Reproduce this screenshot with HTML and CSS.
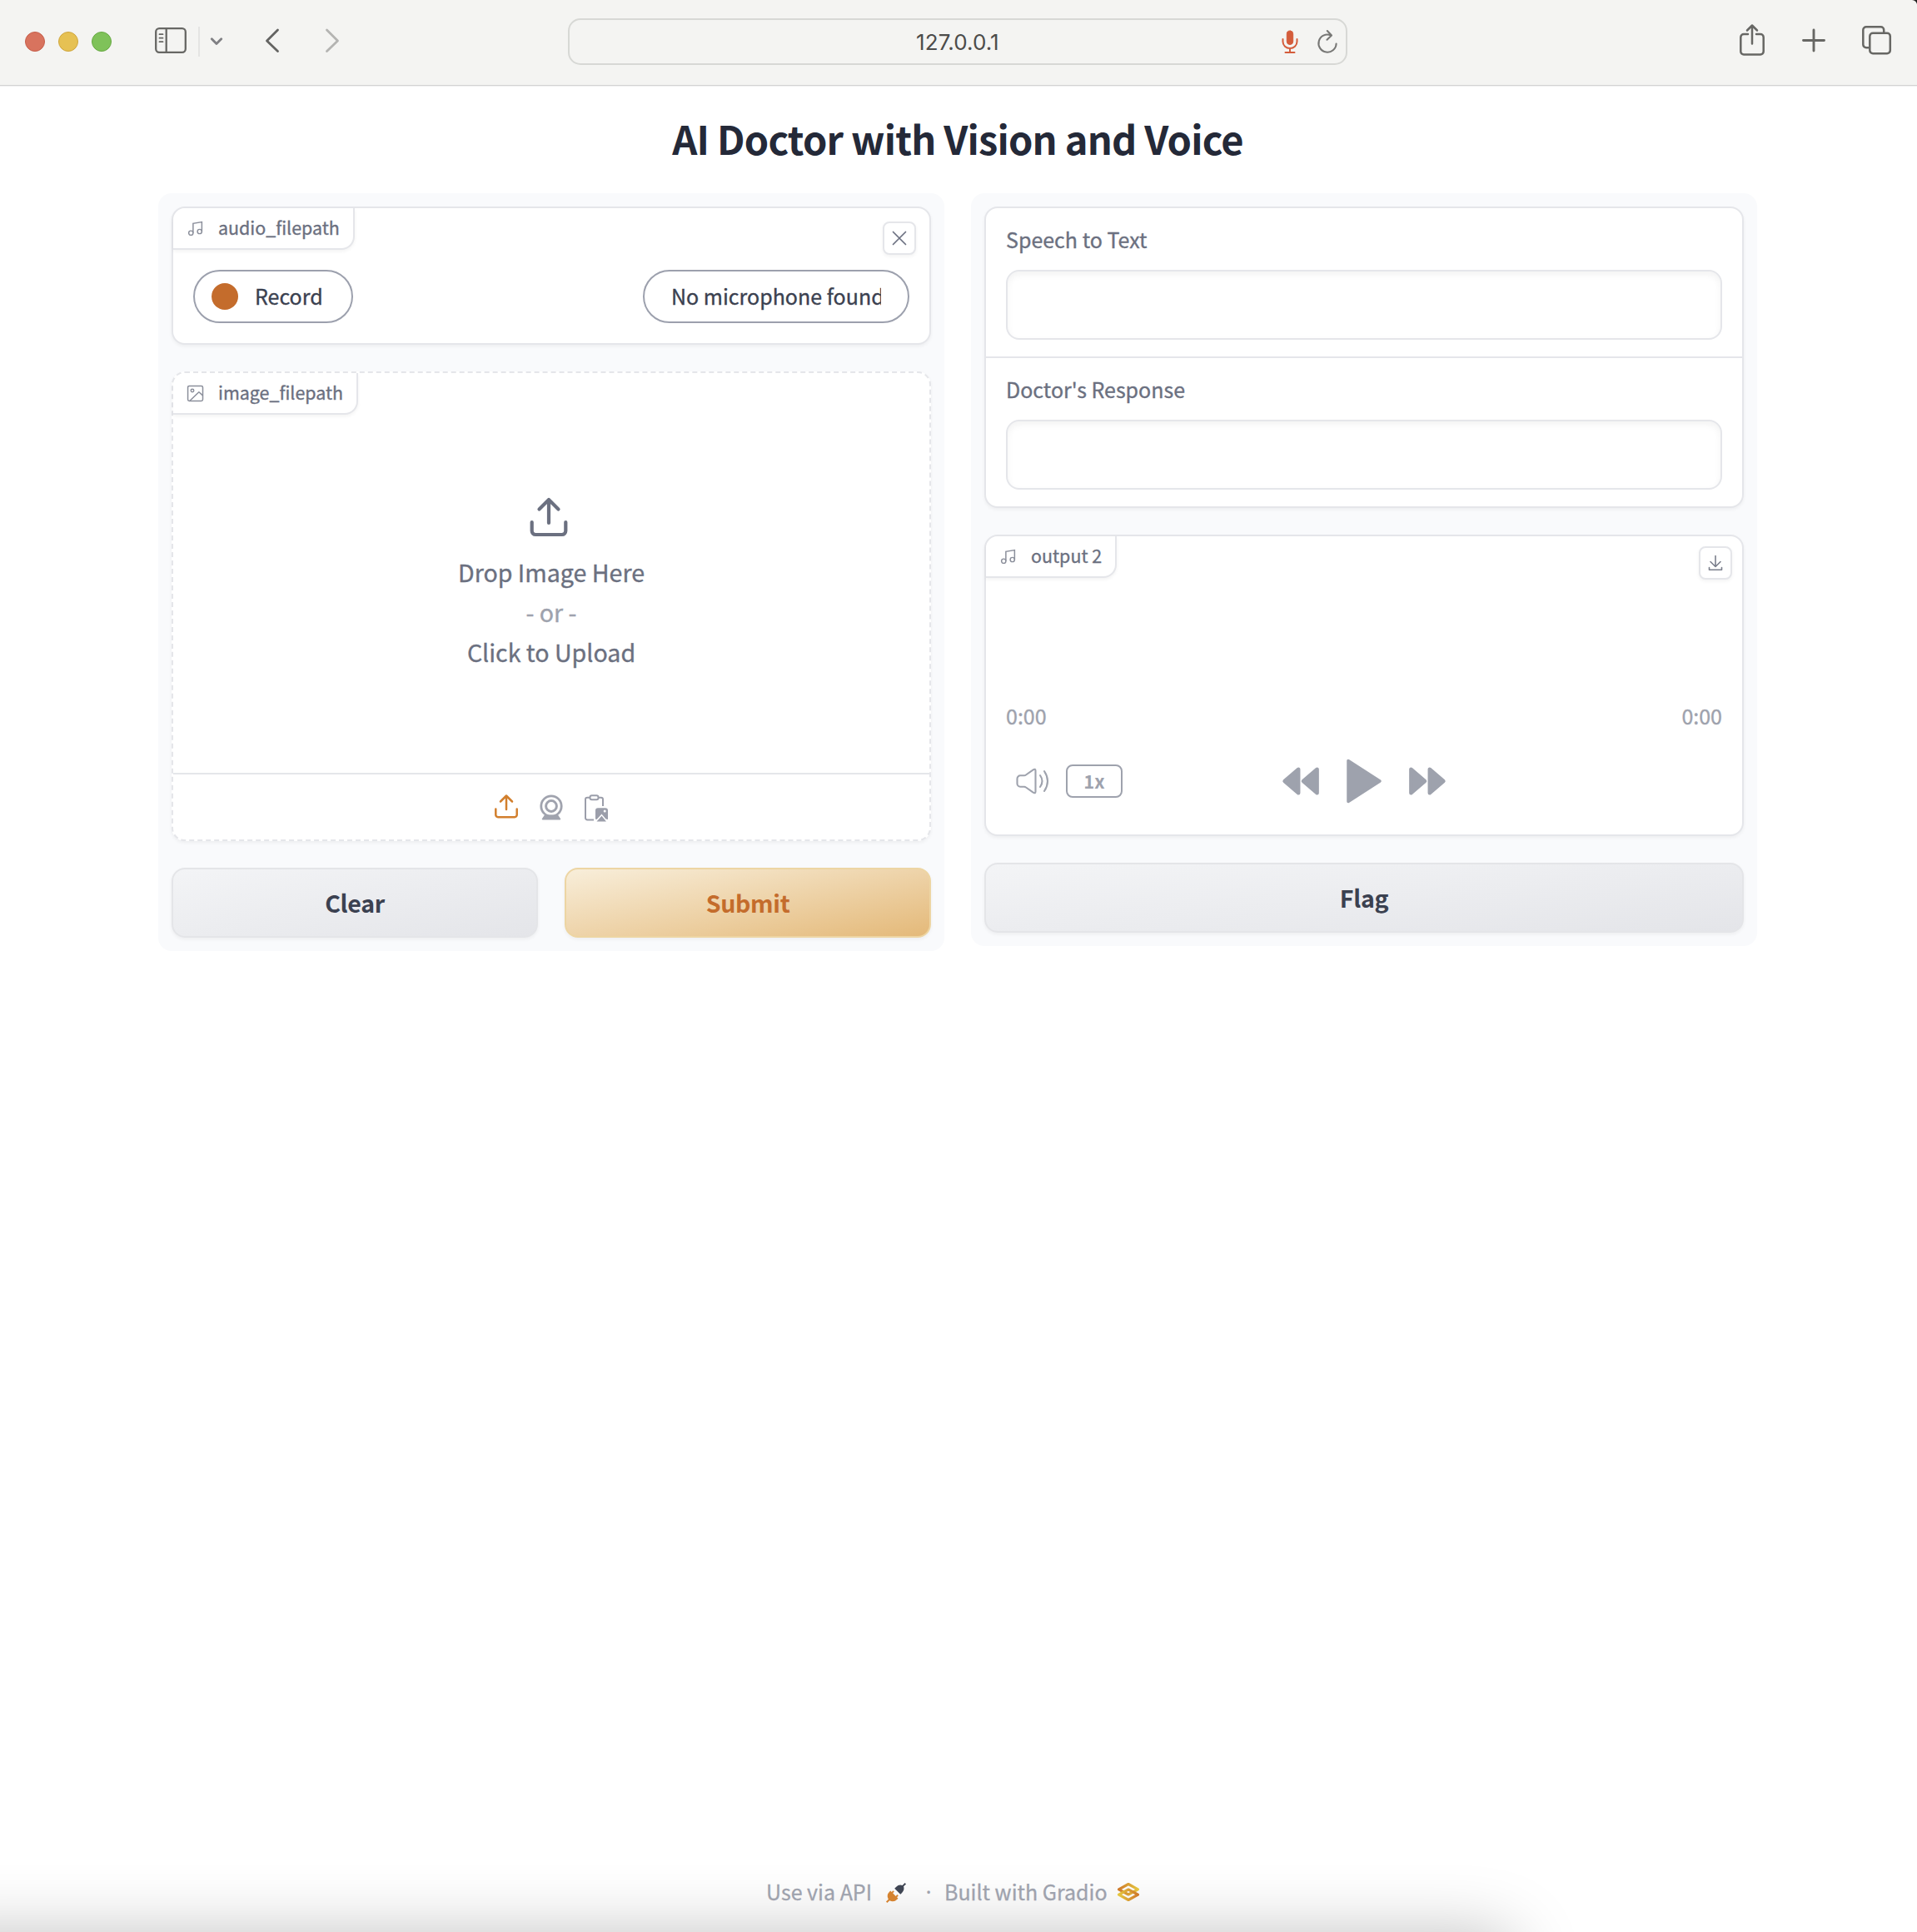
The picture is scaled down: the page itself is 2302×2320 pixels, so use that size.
FILE: index.html
```html
<!DOCTYPE html>
<html lang="en">
<head>
<meta charset="utf-8">
<title>AI Doctor with Vision and Voice</title>
<link rel="stylesheet" href="styles.css">
</head>
<body>
<div class="window">
  <div class="toolbar-wrap">
  <header class="toolbar">
    <div class="lights"><i class="light red"></i><i class="light yellow"></i><i class="light green"></i></div>
    <svg class="ic-sidebar" width="40" height="34" viewBox="0 0 40 34" fill="none" stroke="#676764" stroke-width="2.3"><rect x="2.2" y="2.2" width="35.6" height="28.6" rx="4"/><path d="M14.7 2v29"/><path d="M6.5 9.2h4M6.5 13.7h4M6.5 18.2h4" stroke-width="1.8" stroke-linecap="round"/></svg>
    <span class="tool-sep"></span>
    <svg class="ic-chev" width="16" height="12" viewBox="0 0 16 12" fill="none" stroke="#7f7f83" stroke-width="2.8" stroke-linecap="round" stroke-linejoin="round"><path d="M2.3 2.8 8 8.6l5.7-5.8"/></svg>
    <svg class="ic-back" width="18" height="30" viewBox="0 0 18 30" fill="none" stroke="#646462" stroke-width="2.8" stroke-linecap="round" stroke-linejoin="round"><path d="M15.500 2 2.500 15l13 12.500"/></svg>
    <svg class="ic-fwd" width="18" height="30" viewBox="0 0 18 30" fill="none" stroke="#b4b4b2" stroke-width="2.8" stroke-linecap="round" stroke-linejoin="round"><path d="m2.500 2 13 13-13 12.500"/></svg>
    <div class="address">
      <span class="address-text">127.0.0.1</span>
      <svg class="ic-mic" width="20" height="30" viewBox="0 0 20 30" fill="none" stroke="#d45c3b" stroke-width="2" stroke-linecap="round"><rect x="6.3" y="2" width="7.4" height="16.5" rx="3.7" fill="#d45c3b" stroke-width="1"/><path d="M1.5 12v3a8.5 8 0 0 0 17 0v-3M10 23v5M4.5 28h11"/></svg>
      <svg class="ic-reload" width="26" height="30" viewBox="0 0 26 30" fill="none" stroke="#777775" stroke-width="2.1" stroke-linecap="round" stroke-linejoin="round"><path d="M23.6 17.5A10.6 10.6 0 1 1 16.8 7.2M12.8 2l5.2 5.5-5.5 5.2"/></svg>
    </div>
    <div class="tools-right">
      <svg width="32" height="40" viewBox="0 0 32 40" fill="none" stroke="#676764" stroke-width="2.5" stroke-linecap="round" stroke-linejoin="round"><path d="M11 13H6a3.7 3.7 0 0 0-3.7 3.7v17.1A3.7 3.7 0 0 0 6 37.500h20a3.700 3.700 0 0 0 3.700-3.700V16.700A3.700 3.700 0 0 0 26 13h-5"/><path d="M16 24.500V3M10 8.500l6-6 6 6"/></svg>
      <svg width="28" height="28" viewBox="0 0 28 28" stroke="#676764" stroke-width="2.9" stroke-linecap="round"><path d="M14 2v25M1.500 14.500h25"/></svg>
      <svg width="37" height="36" viewBox="0 0 37 36" fill="none" stroke="#676764" stroke-width="2.500" stroke-linejoin="round"><path d="M9 27.200H6a3.700 3.700 0 0 1-3.700-3.700V6A3.700 3.700 0 0 1 6 2.300h17.500A3.700 3.700 0 0 1 27.200 6v3"/><rect x="10.300" y="9.800" width="24.500" height="24.500" rx="3.700"/></svg>
    </div>
  </header>
  </div>

  <main class="app">
    <h1 class="title">AI Doctor with Vision and Voice</h1>
    <div class="columns">
      <section class="panel">
        <div class="block audio-in">
          <div class="block-label"><svg class="tag-icon" viewBox="0 0 24 24" fill="none" stroke="#8b8f9b" stroke-width="1.700"><path d="M9 18V5l12-2v13"/><circle cx="6" cy="18" r="3"/><circle cx="18" cy="16" r="3"/></svg><span>audio_filepath</span></div>
          <button class="icon-button close"><svg width="18" height="18" viewBox="0 0 18 18" stroke="#6b7080" stroke-width="1.700" stroke-linecap="round"><path d="m1.500 1.500 15 15m0-15-15 15"/></svg></button>
          <div class="record-row">
            <button class="pill record"><i class="dot"></i><span>Record</span></button>
            <div class="pill mic"><span class="clip">No microphone found</span></div>
          </div>
        </div>
        <div class="block image-in">
          <div class="block-label"><svg class="tag-icon" viewBox="0 0 24 24" fill="none" stroke="#8b8f9b" stroke-width="1.700" stroke-linejoin="round"><rect x="1.800" y="1.800" width="20.500" height="20.500" rx="2"/><circle cx="8" cy="8" r="2"/><path d="m4.500 22 12.500-12 5.500 5"/></svg><span>image_filepath</span></div>
          <div class="drop">
            <svg class="drop-icon" width="50" height="50" viewBox="0 0 50 50" fill="none" stroke="#6b7080" stroke-width="4.200" stroke-linecap="round" stroke-linejoin="round"><path d="M4.700 31v10.500a4.500 4.500 0 0 0 4.500 4.500h31.600a4.500 4.500 0 0 0 4.500-4.500V31M25 32V4M13.500 15.500 25 4l11.500 11.500"/></svg>
            <div class="drop-line">Drop Image Here</div>
            <div class="drop-line or">- or -</div>
            <div class="drop-line">Click to Upload</div>
          </div>
          <div class="sources">
            <svg width="30" height="32" viewBox="0 0 30 32" fill="none" stroke="#d27f2d" stroke-width="2.500" stroke-linecap="round" stroke-linejoin="round"><path d="M2.300 18.500v7a2.700 2.700 0 0 0 2.700 2.700h20a2.700 2.700 0 0 0 2.700-2.700v-7M15 19V2.500M8 9.500l7-7 7 7"/></svg>
            <svg width="30" height="32" viewBox="0 0 30 32" fill="none" stroke="#a0a3ae"><circle cx="15" cy="15" r="12.200" stroke-width="2.800"/><circle cx="15" cy="15" r="6.400" stroke-width="3"/><path d="M7 25.500h16l3 4.500a.9.900 0 0 1-.8 1.500H4.800a.9.900 0 0 1-.8-1.500z" fill="#a0a3ae" stroke="none"/></svg>
            <svg width="30" height="34" viewBox="0 0 30 34" fill="none" stroke="#9b9eaa" stroke-width="2"><path d="M12 31.500H4.300A2.300 2.300 0 0 1 2 29.200V7a2.300 2.300 0 0 1 2.300-2.300H7M18 4.700h2.700A2.300 2.300 0 0 1 23 7v8"/><rect x="7.500" y="2.300" width="10" height="5" rx="2.200"/><path d="M17 17.200h9a3 3 0 0 1 3 3V31l-2.500-.5-5-6-6 6.500-1.500-.5V20.200a3 3 0 0 1 3-3z" fill="#9b9eaa" stroke="none"/><circle cx="25.200" cy="21" r="1.500" fill="#fff" stroke="none"/><path d="m15.500 33.500 6-6.800 5.500 6.800z" fill="#9b9eaa" stroke="none"/></svg>
          </div>
        </div>
        <div class="buttons">
          <button class="btn">Clear</button>
          <button class="btn primary">Submit</button>
        </div>
      </section>

      <section class="panel">
        <div class="block form">
          <label class="field"><span class="field-label">Speech to Text</span><span class="input"></span></label>
          <label class="field second"><span class="field-label">Doctor's Response</span><span class="input"></span></label>
        </div>
        <div class="block audio-out">
          <div class="block-label"><svg class="tag-icon" viewBox="0 0 24 24" fill="none" stroke="#8b8f9b" stroke-width="1.700"><path d="M9 18V5l12-2v13"/><circle cx="6" cy="18" r="3"/><circle cx="18" cy="16" r="3"/></svg><span>output 2</span></div>
          <button class="icon-button download"><svg width="18" height="20" viewBox="0 0 18 20" fill="none" stroke="#7b7f8c" stroke-width="1.600" stroke-linecap="round" stroke-linejoin="round"><path d="M9 1.500v13M3 8.500l6 6 6-6M1.500 15.500v2.700h15v-2.700"/></svg></button>
          <div class="times"><span>0:00</span><span>0:00</span></div>
          <div class="player">
            <div class="player-left">
              <svg width="42" height="36" viewBox="0 0 42 36" fill="none" stroke="#9ea2ad" stroke-width="2.100" stroke-linejoin="round" stroke-linecap="round"><path d="M2.500 15a3.700 3.700 0 0 1 3.700-3.700H11q1 0 2-.8l8.700-6.200q2.800-1.600 2.800 1.200v25q0 2.800-2.800 1.200L13 25.500q-1-.8-2-.8H6.200A3.700 3.700 0 0 1 2.500 21zM30 11q5 7 0 14M35 6q8 12 0 24"/></svg>
              <span class="speed">1x</span>
            </div>
            <div class="player-mid">
              <svg width="44" height="34" viewBox="0 0 44 34" fill="#9ea2ad" stroke="#9ea2ad" stroke-width="4.500" stroke-linejoin="round"><path d="M19.200 2.800v28.400L2.600 17zM41.600 2.800v28.400L25 17z"/></svg>
              <svg width="44" height="60" viewBox="0 0 44 60" fill="#9ea2ad" stroke="#9ea2ad" stroke-width="3.500" stroke-linejoin="round"><path d="M3 5.500v49L41 30z"/></svg>
              <svg width="44" height="34" viewBox="0 0 44 34" fill="#9ea2ad" stroke="#9ea2ad" stroke-width="4.500" stroke-linejoin="round"><path d="M2.400 2.800v28.400L19 17zM24.800 2.800v28.400L41.400 17z"/></svg>
            </div>
          </div>
        </div>
        <div class="buttons"><button class="btn">Flag</button></div>
      </section>
    </div>
  </main>

  <footer class="footer">
    <span>Use via API</span>
    <svg class="ic-plug" width="24" height="24" viewBox="0 0 24 24"><g transform="rotate(45 12 12)"><path d="M7 9.500V7q0-5 4-6.800V-4h2V.2Q17 2 17 7v2.500z" fill="#404654"/><path d="M5.500 15h2v-2.500h2V15h5v-2.500h2V15h2v1.500q0 6-5.500 7.500V28h-2v-4q-5.500-1.500-5.500-7.500z" fill="#d58330"/></g></svg>
    <span class="mid">·</span>
    <span class="built">Built with Gradio</span>
    <svg class="ic-gradio" width="28" height="24" viewBox="0 0 28 24" fill="none" stroke-width="3.200" stroke-linejoin="round"><defs><linearGradient id="up" x1="0" y1="0" x2="1" y2="0"><stop offset="0" stop-color="#cf7a2b"/><stop offset="1" stop-color="#e5c63f"/></linearGradient><linearGradient id="down" x1="0" y1="0" x2="1" y2="0"><stop offset="0" stop-color="#e5c63f"/><stop offset="1" stop-color="#cf7a2b"/></linearGradient></defs><path d="m14 2.500 11.500 6.300L14 15 2.500 8.800z" stroke="url(#up)"/><path d="m14 9 11.500 6.200L14 21.500 2.500 15.200z" stroke="url(#down)"/></svg>
  </footer>
</div>
</body>
</html>
```
FILE: styles.css
```css
* { box-sizing: border-box; }
body { margin: 0; background: #fff; color: #6b7080; font-family: "Noto Sans CJK SC", "Noto Sans", sans-serif; }
svg { display: block; flex: none; overflow: visible; }
button { font: inherit; margin: 0; padding: 0; }
.window { width: 2302px; height: 2320px; display: flex; flex-direction: column; overflow: hidden; }

/* Browser toolbar */
.toolbar-wrap { background: #222; }
.toolbar { height: 103px; background: #f4f4f2; border-bottom: 1px solid #d3d3d3; border-top-right-radius: 6px; box-shadow: 0 1px #f0f0f0; display: flex; align-items: flex-start; padding: 0 30px; }
.lights { display: flex; gap: 16px; padding-top: 38px; }
.light { width: 24px; height: 24px; border-radius: 50%; border: 1px solid; }
.red { background: #d8735e; border-color: #c65e4a; }
.yellow { background: #e6c153; border-color: #cfa63e; }
.green { background: #7fc25a; border-color: #68aa44; }
.ic-sidebar { margin: 32px 0 0 51px; }
.tool-sep { width: 2px; height: 36px; background: #e4e4e3; margin: 32px 0 0 13px; }
.ic-chev { margin: 44px 0 0 12px; }
.ic-back { margin: 34px 0 0 50px; }
.ic-fwd { margin: 34px 0 0 54px; }
.address { width: 936px; height: 56px; margin: 22px 0 0 274px; border: 2px solid #d7d8d5; border-radius: 15px; display: flex; align-items: center; padding-right: 9px; }
.address-text { flex: 1; padding: 2px 0 0 416px; font: 26px/50px Inter, sans-serif; letter-spacing: .1px; color: #4c4c4a; }
.ic-mic { margin-right: 22px; }
.tools-right { display: flex; align-items: center; margin: 28px 0 0 auto; gap: 43.5px; }

/* App */
.app { padding: 24px 192px 0 190px; }
.title { margin: 0 0 28px; font-size: 47px; line-height: 77px; letter-spacing: -.82px; text-align: center; color: #242938; font-weight: 700; }
.columns { display: flex; gap: 32px; align-items: flex-start; -webkit-text-stroke: .35px; }
.panel { width: 944px; background: #f9fafc; border-radius: 16px; padding: 16px; display: flex; flex-direction: column; gap: 32px; }
.block { position: relative; background: #fff; border: 2px solid #e5e6ea; border-radius: 16px; box-shadow: 0 2px 4px rgba(0,0,0,.05); }
.block-label { display: flex; align-items: center; width: fit-content; height: 50px; padding: 0 16px 2px; border: solid #e5e6ea; border-width: 0 2px 2px 0; border-radius: 15px 0 16px 0; background: #fff; box-shadow: 0 2px 4px rgba(0,0,0,.05); font-size: 21.450px; line-height: 46px; white-space: nowrap; }
.tag-icon { width: 21px; height: 21px; margin: 3px 17px 0 0; }
.icon-button { position: absolute; width: 40px; height: 40px; display: grid; place-items: center; background: #fff; border: 2px solid #e5e6ea; border-radius: 8px; box-shadow: 0 2px 4px rgba(0,0,0,.05); }
.close { right: 16px; top: 16px; }
.download { right: 12px; top: 12px; }
.audio-in { height: 166px; }
.record-row { display: flex; justify-content: space-between; padding: 24px 24px 0; }
.pill { height: 64px; display: flex; align-items: center; border: 2px solid #9ca0ad; border-radius: 32px; background: #fff; color: #3b4150; font-size: 25px; line-height: 58px; white-space: nowrap; }
.pill span { padding-bottom: 3px; }
.record { width: 192px; padding-left: 20px; gap: 20px; }
.dot { width: 32px; height: 32px; border-radius: 50%; background: #c46c2c; }
.mic { width: 320px; padding-left: 32px; }
.clip { width: 252px; overflow: hidden; }
.image-in { height: 564px; border-style: dashed; display: flex; flex-direction: column; }
.drop { flex: 1; display: flex; flex-direction: column; align-items: center; padding-top: 98px; font-size: 28.600px; }
.drop-icon { margin: 0 6px 17px 0; }
.drop-line { line-height: 48px; }
.or { color: #9ea2ad; }
.sources { height: 80px; border-top: 2px solid #e5e6ea; display: flex; justify-content: center; gap: 24px; padding-top: 23px; }
.buttons { display: flex; gap: 32px; -webkit-text-stroke: 0; }
.btn { flex: 1; height: 84px; border: 2px solid #e4e5e8; border-radius: 16px; background: linear-gradient(to bottom right, #f3f4f6, #e4e5e9); box-shadow: 0 2px 4px rgba(0,0,0,.05); color: #3b4150; font-size: 28.600px; font-weight: 700; line-height: 80px; letter-spacing: -.35px; }
.primary { background: linear-gradient(to bottom right, #f8eeda, #e4b979); border-color: #edd5a3; color: #c46c2c; }

.form { height: 362px; }
.field { display: block; padding: 0 24px; height: 178px; }
.second { height: 180px; border-top: 2px solid #e5e6ea; }
.field-label { display: block; font-size: 25px; line-height: 74px; }
.input { display: block; height: 84px; border: 2px solid #e5e6ea; border-radius: 16px; box-shadow: inset 0 4px 8px rgba(0,0,0,.05); }
.audio-out { height: 362px; }
.times { display: flex; justify-content: space-between; margin: 141px 24px 0; font-size: 25px; line-height: 48px; color: #9ea2ad; }
.player { display: grid; grid-template-columns: 1fr auto 1fr; align-items: center; height: 60px; margin: 25px 24px 0; }
.player-left { display: flex; align-items: center; padding-left: 11px; }
.speed { margin-left: 19px; width: 68px; height: 40px; border: 2px solid #9ea2ad; border-radius: 8px; text-align: center; font-size: 22px; line-height: 34px; font-weight: 700; color: #9ea2ad; -webkit-text-stroke: 0; }
.player-mid { display: flex; align-items: center; gap: 32px; }

.footer { position: relative; height: 80px; margin-top: auto; display: flex; align-items: flex-start; padding-left: 920px; font-size: 25px; line-height: 62px; color: #9ea2ad; white-space: nowrap; -webkit-text-stroke: .3px; }
/* Soft shade along the bottom edge */
.footer::before { content: ""; position: absolute; z-index: -1; top: 82px; left: -100px; width: 1918px; height: 300px; border-radius: 30px; background: rgba(0,0,0,.25); box-shadow: 0 0 80px rgba(0,0,0,.25); }
.ic-plug { margin: 21px 0 0 17px; }
.mid { width: 8px; margin-left: 23px; font-family: "Noto Sans", sans-serif; text-align: center; }
.built { margin-left: 15px; }
.ic-gradio { margin: 20px 0 0 11px; }
```
